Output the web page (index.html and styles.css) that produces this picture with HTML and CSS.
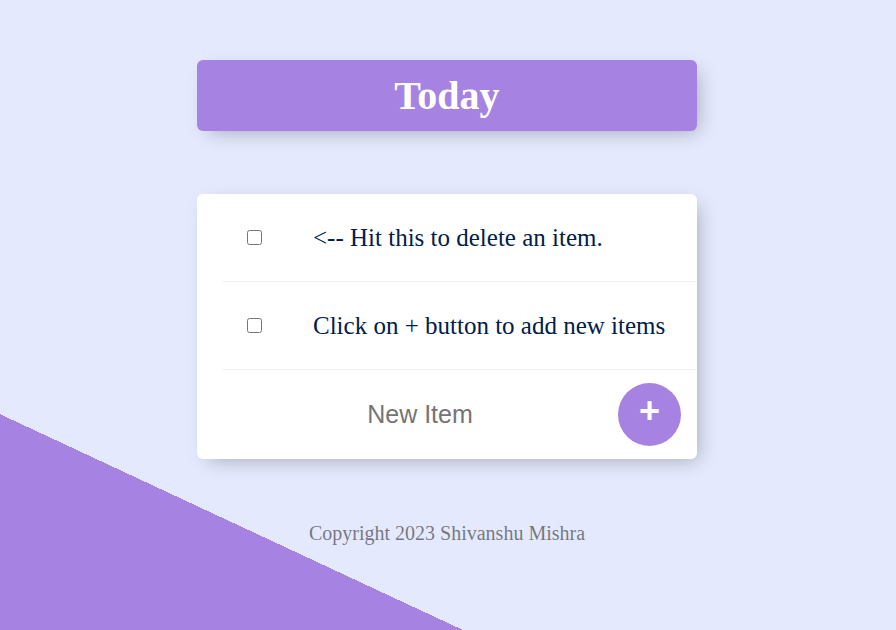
FILE: index.html
```html
<!DOCTYPE html>
<html lang="en">
<head>
<meta charset="utf-8">
<title>To-Do List</title>
<link rel="stylesheet" href="styles.css">
</head>
<body>
  <div class="box heading">
    <h1 class="title">Today</h1>
  </div>

  <div class="box list">
    <form class="item-form">
      <div class="item">
        <input class="check" type="checkbox">
        <p class="item-text">&lt;-- Hit this to delete an item.</p>
      </div>
    </form>
    <form class="item-form">
      <div class="item">
        <input class="check" type="checkbox">
        <p class="item-text">Click on + button to add new items</p>
      </div>
    </form>
    <form class="new-form">
      <input class="new-input" type="text" placeholder="New Item" autocomplete="off">
      <button class="add-btn" type="button">+</button>
    </form>
  </div>

  <footer class="footer">Copyright 2023 Shivanshu Mishra</footer>
</body>
</html>
```

FILE: styles.css
```css
html {
  min-height: 100%;
  background-color: #E4E9FD;
  background-image: linear-gradient(25deg, #A683E3 20.6%, #E4E9FD 20.6%);
  background-attachment: fixed;
}

body {
  margin: 0;
  padding: 60px 2px 0 0;
  font-family: "Liberation Sans", Arial, sans-serif;
}

.box {
  width: 500px;
  margin: 0 auto 63px;
  background: #ffffff;
  border-radius: 6px;
  box-shadow: 6px 6px 19px -6px rgba(0, 0, 0, 0.3);
}

.heading {
  background-color: #A683E3;
  text-align: center;
}

.title {
  margin: 0;
  padding: 12.5px;
  font-family: "Liberation Serif", "Times New Roman", serif;
  font-size: 40px;
  line-height: 46px;
  font-weight: bold;
  color: #ffffff;
}

.item-form {
  margin: 0 0 0 25px;
}

.item {
  min-height: 87px;
  display: flex;
  align-items: center;
  border-bottom: 1px solid #F1F1F1;
}

.check {
  width: 15px;
  height: 15px;
  margin: 25px;
  flex: none;
}

.item-text {
  margin: 0;
  padding: 25px 25px 25px 26px;
  font-family: "Liberation Serif", "Times New Roman", serif;
  font-size: 25px;
  line-height: 29px;
  color: #00204a;
}

.new-form {
  margin-left: 25px;
  min-height: 89px;
  display: flex;
  align-items: center;
}

.new-input {
  width: 396px;
  height: 75px;
  padding: 0;
  border: none;
  background: transparent;
  text-align: center;
  font-family: "Liberation Sans", Arial, sans-serif;
  font-size: 25px;
  color: #333;
}

.new-input::placeholder {
  color: #757575;
  opacity: 1;
}

.new-input:focus {
  outline: none;
}

.add-btn {
  margin-left: 0;
  width: 63px;
  height: 63px;
  padding: 0 0 7px;
  border: 0;
  border-radius: 50%;
  background-color: #A683E3;
  color: #ffffff;
  font-family: "Liberation Sans", Arial, sans-serif;
  font-size: 36px;
  font-weight: bold;
  line-height: 1;
  flex: none;
}

.footer {
  text-align: center;
  color: rgba(0, 0, 0, 0.5);
  font-family: "Liberation Serif", "Times New Roman", serif;
  font-size: 20px;
  line-height: 23px;
}
```
